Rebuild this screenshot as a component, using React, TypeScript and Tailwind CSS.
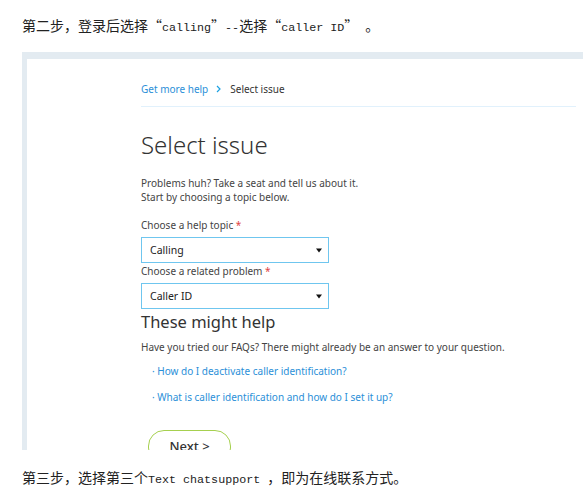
import React from "react";

const mono = "font-['Liberation_Mono',monospace] text-[11.7px]";

function Caret() {
  return (
    <svg width="6" height="5" viewBox="0 0 6 5" className="shrink-0">
      <path d="M0 0.5 H6 L3 4.5 Z" fill="#111" />
    </svg>
  );
}

function SelectBox({ value }: { value: string }) {
  return (
    <div className="flex h-[26px] w-[188px] items-center justify-between border border-[#6fc6ef] bg-white pl-[8px] pr-[6px]">
      <span className="pt-[2px] text-[10.5px] text-[#222]">{value}</span>
      <Caret />
    </div>
  );
}

function Label({ text }: { text: string }) {
  return (
    <div className="h-[14px] text-[10px] leading-[14px] text-[#444]">
      {text} <span className="text-[#e04343]">*</span>
    </div>
  );
}

export default function App() {
  return (
    <div className="h-[499px] w-[583px] overflow-hidden bg-white font-['Noto_Sans_CJK_SC',sans-serif] text-[14px] text-[#222]">
      <p className="mt-[15px] h-[20px] whitespace-nowrap pl-[22px] leading-[20px]">
        第二步，登录后选择“<span className={mono}>calling</span>”<span className={mono}>--</span>选择“
        <span className={mono}>caller ID</span>”<span className={mono}>{"\u00a0"}</span>。
      </p>

      <div className="ml-[22px] mt-[17px] h-[398px] overflow-hidden border-l-[5px] border-t-[7px] border-[#e3ebf1] bg-white font-['Noto_Sans',sans-serif]">
        <div className="pl-[114px]">
          {/* breadcrumb */}
          <div className="mt-[22px] w-[435px] border-b border-[#e1f1fc] pb-[9px]">
            <div className="flex h-[16px] items-center text-[10px] leading-[16px]">
              <span className="text-[#2b8fd8]">Get more help</span>
              <svg width="5" height="8" viewBox="0 0 5 8" className="ml-[8px] mr-[9px]">
                <path d="M1 1 L4 4 L1 7" fill="none" stroke="#1ba1e2" strokeWidth="1.2" />
              </svg>
              <span className="text-[#333]">Select issue</span>
            </div>
          </div>

          <h1 className="mt-[20px] h-[36px] text-[24px] font-light leading-[36px] text-[#333]">
            Select issue
          </h1>

          <div className="mt-[13px] text-[10px] leading-[14px] text-[#444]">
            <div>Problems huh? Take a seat and tell us about it.</div>
            <div>Start by choosing a topic below.</div>
          </div>

          <div className="mt-[14px]">
            <Label text="Choose a help topic" />
          </div>
          <div className="mt-[5px]">
            <SelectBox value="Calling" />
          </div>
          <div className="mt-[1px]">
            <Label text="Choose a related problem" />
          </div>
          <div className="mt-[5px]">
            <SelectBox value="Caller ID" />
          </div>

          <h2 className="mt-[1px] h-[24px] text-[16.5px] leading-[24px] text-[#333]">These might help</h2>
          <div className="mt-[6px] h-[14px] whitespace-nowrap text-[10px] leading-[14px] text-[#444]">
            Have you tried our FAQs? There might already be an answer to your question.
          </div>

          <ul className="pl-[11px] text-[10px] leading-[14px] text-[#2b8fd8]">
            <li className="mt-[10px] h-[14px]">· How do I deactivate caller identification?</li>
            <li className="mt-[12px] h-[14px]">· What is caller identification and how do I set it up?</li>
          </ul>

          <button className="ml-[7px] mt-[26px] flex h-[34px] w-[83px] items-start justify-center rounded-[16px] border border-[#a6d04f] bg-white pt-[6px] text-[13px] font-medium leading-[18px] text-[#333]">
            Next &gt;
          </button>
        </div>
      </div>

      <p className="mt-[17px] h-[20px] whitespace-nowrap pl-[22px] leading-[20px]">
        第三步，选择第三个<span className={mono}>Text chatsupport </span>，即为在线联系方式。
      </p>
    </div>
  );
}
